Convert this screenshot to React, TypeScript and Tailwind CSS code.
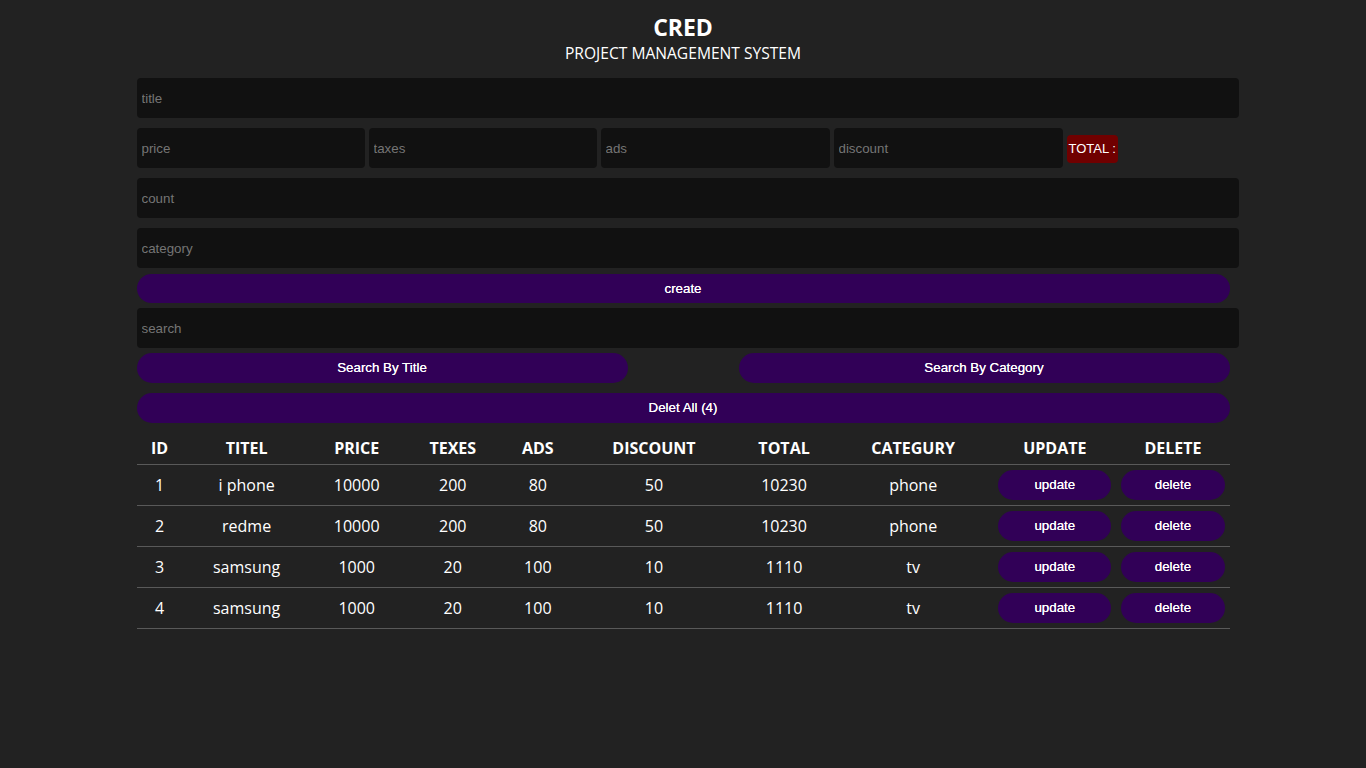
import React from 'react'

const rows = [
  { id: 1, title: 'i phone', price: 10000, taxes: 200, ads: 80, discount: 50, total: 10230, category: 'phone' },
  { id: 2, title: 'redme', price: 10000, taxes: 200, ads: 80, discount: 50, total: 10230, category: 'phone' },
  { id: 3, title: 'samsung', price: 1000, taxes: 20, ads: 100, discount: 10, total: 1110, category: 'tv' },
  { id: 4, title: 'samsung', price: 1000, taxes: 20, ads: 100, discount: 10, total: 1110, category: 'tv' },
]

const heads = [
  { label: 'ID', w: 'w-[46px]' },
  { label: 'TITEL', w: 'w-[128px]' },
  { label: 'PRICE', w: 'w-[92px]' },
  { label: 'TEXES', w: 'w-[100px]' },
  { label: 'ADS', w: 'w-[70px]' },
  { label: 'DISCOUNT', w: 'w-[162px]' },
  { label: 'TOTAL', w: 'w-[98px]' },
  { label: 'CATEGURY', w: 'w-[160px]' },
  { label: 'UPDATE', w: 'w-[123px]' },
  { label: 'DELETE', w: 'w-[113px]' },
]

const inputCls =
  "h-10 bg-[#111] rounded-[4px] px-[5px] text-[13.33px] text-white placeholder:text-[#757575] outline-none font-['Liberation_Sans',Arial,sans-serif]"

const btnCls =
  "w-full h-[30px] rounded-full bg-[#310057] text-white text-[13.33px] font-['Liberation_Sans',Arial,sans-serif] [text-shadow:0_0_0.3px_#fff]"

export default function App() {
  return (
    <div className="min-h-screen bg-[#222] text-white font-['Open_Sans','Noto_Sans',sans-serif]">
      <div className="w-[1093px] mx-auto pt-[13px]">
        {/* Header */}
        <div className="text-center">
          <h2 className="text-[23px] font-bold leading-[28px]">CRED</h2>
          <p className="text-[15.6px] leading-[22px] mt-[1px]">PROJECT MANAGEMENT SYSTEM</p>
        </div>

        {/* Inputs */}
        <div className="flex flex-col gap-[10px] mt-[14px]">
          <input placeholder="title" className={`${inputCls} w-[1102px]`} />
          <div className="flex items-center gap-[4px]">
            <input placeholder="price" className={`${inputCls} w-[228px]`} />
            <input placeholder="taxes" className={`${inputCls} w-[228px]`} />
            <input placeholder="ads" className={`${inputCls} w-[229px]`} />
            <input placeholder="discount" className={`${inputCls} w-[229px]`} />
            <span className="h-[28px] mt-[1px] pt-[1px] px-[2px] flex items-center rounded-[4px] bg-[#700000] text-[13px] font-['Liberation_Sans',Arial,sans-serif]">
              TOTAL :
            </span>
          </div>
          <input placeholder="count" className={`${inputCls} w-[1102px]`} />
          <input placeholder="category" className={`${inputCls} w-[1102px]`} />
        </div>

        <button className={`${btnCls} mt-[6px] block !h-[29px]`}>create</button>
        <input placeholder="search" className={`${inputCls} w-[1102px] mt-[5px] block`} />

        <div className="flex justify-between mt-[5px]">
          <button className={`${btnCls} !w-[491px]`}>Search By Title</button>
          <button className={`${btnCls} !w-[491px]`}>Search By Category</button>
        </div>

        <button className={`${btnCls} mt-[10px] block`}>Delet All (4)</button>

        {/* Table */}
        <table className="w-full mt-[10px] border-collapse text-center text-[16px]">
          <thead>
            <tr className="border-b border-[#595959]">
              {heads.map((h) => (
                <th key={h.label} className={`${h.w} h-[31px] font-bold`}>
                  {h.label}
                </th>
              ))}
            </tr>
          </thead>
          <tbody>
            {rows.map((r) => (
              <tr key={r.id} className="border-b border-[#595959]">
                <td className="h-[41px]">{r.id}</td>
                <td>{r.title}</td>
                <td>{r.price}</td>
                <td>{r.taxes}</td>
                <td>{r.ads}</td>
                <td>{r.discount}</td>
                <td>{r.total}</td>
                <td>{r.category}</td>
                <td className="px-[5px]">
                  <button className={btnCls}>update</button>
                </td>
                <td className="px-[5px]">
                  <button className={btnCls}>delete</button>
                </td>
              </tr>
            ))}
          </tbody>
        </table>
      </div>
    </div>
  )
}
